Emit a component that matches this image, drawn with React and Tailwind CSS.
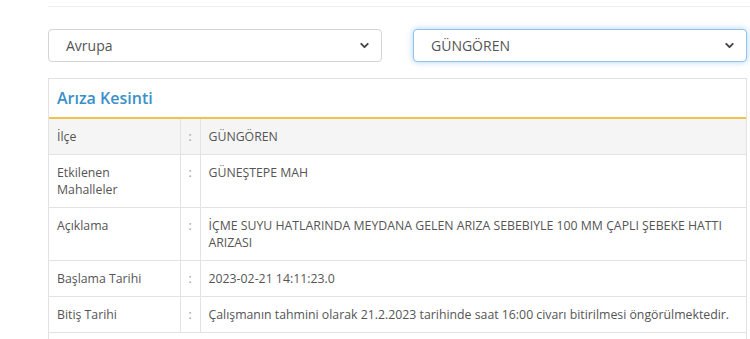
import { ChevronDown } from 'lucide-react'

const rows = [
  { label: 'İlçe', value: 'GÜNGÖREN' },
  { label: 'Etkilenen Mahalleler', value: 'GÜNEŞTEPE MAH' },
  {
    label: 'Açıklama',
    value: 'İÇME SUYU HATLARINDA MEYDANA GELEN ARIZA SEBEBIYLE 100 MM ÇAPLI ŞEBEKE HATTI ARIZASI',
  },
  { label: 'Başlama Tarihi', value: '2023-02-21 14:11:23.0' },
  {
    label: 'Bitiş Tarihi',
    value: 'Çalışmanın tahmini olarak 21.2.2023 tarihinde saat 16:00 civarı bitirilmesi öngörülmektedir.',
  },
]

function FakeSelect({ text, focused }) {
  return (
    <div
      className={`h-[33px] flex items-center justify-between pl-[17px] pr-[10px] rounded-[4px] bg-white border text-[14px] text-[#555] ${
        focused
          ? 'border-[#8fc3ea] shadow-[0_0_6px_rgba(102,175,233,0.55)]'
          : 'border-[#d4d4d4]'
      }`}
    >
      <span>{text}</span>
      <ChevronDown size={13} strokeWidth={3.5} className="text-[#444]" />
    </div>
  )
}

export default function App() {
  return (
    <div className="w-[750px] h-[339px] overflow-hidden bg-white" style={{ fontFamily: '"Open Sans", "Noto Sans", sans-serif' }}>
      <div className="pl-[48px] pr-[3px]">
        <div className="h-[7px] border-b border-[#efefef] -mr-[3px]" />
        <div className="grid grid-cols-2 gap-[31px] mt-[22px]">
          <FakeSelect text="Avrupa" />
          <FakeSelect text="GÜNGÖREN" focused />
        </div>

        <div className="mt-[16px] border border-[#e2e2e2] bg-white">
          <div className="h-[40px] flex items-center pl-[8px] pb-[1px] border-b-2 border-[#f0c24b]">
            <h3 className="text-[16px] font-semibold text-[#3b8fc9]">Arıza Kesinti</h3>
          </div>
          <table className="w-full border-collapse text-[12.3px] leading-[17px] text-[#555]">
            <tbody>
              {rows.map((r, i) => (
                <tr key={r.label} className={`border-b border-[#e3e3e3] ${i === 0 ? 'bg-[#f5f5f5]' : ''}`}>
                  <td className="w-[131px] align-top py-[9px] pl-[8px] pr-[20px] border-r border-[#e3e3e3]">{r.label}</td>
                  <td className="w-[20px] align-top py-[9px] text-center text-[#999] border-r border-[#e3e3e3]">:</td>
                  <td className="align-top py-[9px] pl-[8px] pr-[14px]">{r.value}</td>
                </tr>
              ))}
              <tr>
                <td className="h-[40px]" colSpan={3} />
              </tr>
            </tbody>
          </table>
        </div>
      </div>
    </div>
  )
}
